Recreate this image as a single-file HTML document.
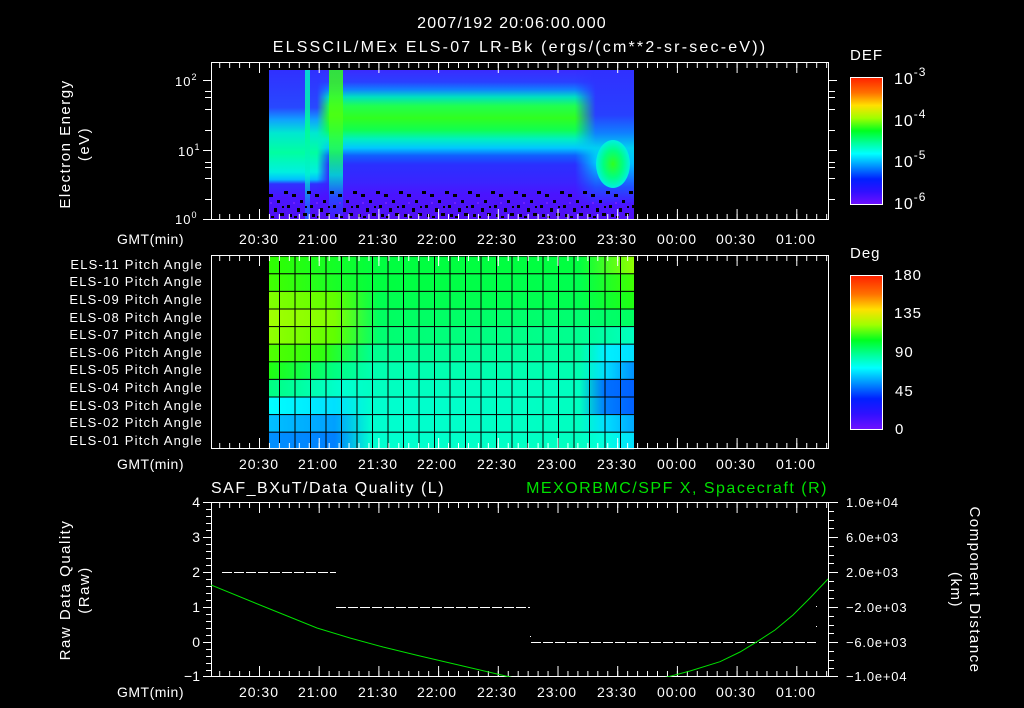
<!DOCTYPE html>
<html><head><meta charset="utf-8"><style>
html,body{margin:0;padding:0;background:#000;width:1024px;height:708px;overflow:hidden;position:relative}
.a{position:absolute}
svg{position:absolute;left:0;top:0}
text{font-family:"Liberation Sans",sans-serif;fill:#fff}
</style></head><body>
<div class="a" style="left:269px;top:70px;width:365px;height:150px;background:linear-gradient(to bottom,#3a2cff 0%,#2a40ff 8%,#1080ff 13%,#00e0c0 18%,#20ff50 24%,#30ff20 32%,#10ff50 40%,#00f0c0 46%,#00c8ff 52%,#1060ff 57%,#2a30ff 63%,#3a24ff 75%,#4a14ff 83%,#5010f0 100%)"></div>
<div class="a" style="left:269px;top:70px;width:60px;height:150px;background:linear-gradient(to bottom,#3030ff 0%,#2848ff 25%,#10a0ff 33%,#00e8d0 42%,#00ffa0 55%,#00f0e0 68%,#00c0ff 73%,#3030ff 76%,#4a14ff 85%,#5010f0 100%);-webkit-mask-image:linear-gradient(to right,#000 80%,transparent)"></div>
<div class="a" style="left:305px;top:70px;width:5px;height:150px;background:linear-gradient(to bottom,#00f0d0,#00ff90 40%,#00f0d0 70%,#2060ff 90%);opacity:.85"></div>
<div class="a" style="left:329px;top:70px;width:14px;height:150px;background:linear-gradient(to bottom,#30ff20,#50ff10 30%,#20ff50 55%,#00e0d0 70%,#2050ff 85%,#4a14ff);opacity:.85"></div>
<div class="a" style="left:575px;top:70px;width:59px;height:150px;background:linear-gradient(to bottom,#3030ff 0%,#2840ff 30%,#1080ff 42%,#00d0f0 52%,#00c0ff 62%,#2050ff 78%,#4a14ff 90%,#5010f0);-webkit-mask-image:linear-gradient(to right,transparent,#000 35%)"></div>
<div class="a" style="left:596px;top:140px;width:34px;height:48px;border-radius:50%;background:radial-gradient(#30ff20,#00ff80 40%,#00f0e0 70%,rgba(0,200,255,0) 100%)"></div>
<svg width="1024" height="708">
<defs>
<pattern id="nz" x="269" y="188" width="23" height="32" patternUnits="userSpaceOnUse">
<rect x="0" y="6" width="4" height="3" fill="#000"/><rect x="8" y="12" width="3" height="3" fill="#000"/><rect x="15" y="3" width="4" height="3" fill="#000"/><rect x="5" y="20" width="3" height="4" fill="#000"/><rect x="18" y="17" width="3" height="3" fill="#000"/><rect x="11" y="25" width="4" height="3" fill="#000"/><rect x="1" y="14" width="2" height="2" fill="#7020ff"/><rect x="20" y="26" width="3" height="3" fill="#000"/><rect x="13" y="18" width="2" height="2" fill="#000"/><rect x="2" y="28" width="3" height="2" fill="#000"/>
</pattern>
<pattern id="mt" x="259" y="0" width="9.95" height="708" patternUnits="userSpaceOnUse"><rect x="0" y="0" width="1" height="708" fill="#fff"/></pattern>
<pattern id="Mt" x="259" y="0" width="59.7" height="708" patternUnits="userSpaceOnUse"><rect x="0" y="0" width="1" height="708" fill="#fff"/></pattern>
<clipPath id="c3"><rect x="211" y="502" width="618" height="175"/></clipPath>
<linearGradient id="cb" x1="0" y1="0" x2="0" y2="1"><stop offset="0" stop-color="#ff2000"/><stop offset=".12" stop-color="#ff7000"/><stop offset=".22" stop-color="#ffe000"/><stop offset=".32" stop-color="#a0ff00"/><stop offset=".42" stop-color="#00ff20"/><stop offset=".52" stop-color="#00ffa0"/><stop offset=".6" stop-color="#00ffff"/><stop offset=".7" stop-color="#0090ff"/><stop offset=".8" stop-color="#0020ff"/><stop offset=".9" stop-color="#3010ff"/><stop offset="1" stop-color="#7010ff"/></linearGradient>
<linearGradient id="r1"><stop offset="0" stop-color="#30ff00"/><stop offset=".3" stop-color="#00ff40"/><stop offset=".85" stop-color="#00ff40"/><stop offset="1" stop-color="#90ff00"/></linearGradient>
<linearGradient id="r2"><stop offset="0" stop-color="#40ff00"/><stop offset=".3" stop-color="#00ff40"/><stop offset=".85" stop-color="#00ff50"/><stop offset="1" stop-color="#40ff00"/></linearGradient>
<linearGradient id="r3"><stop offset="0" stop-color="#80ff00"/><stop offset=".18" stop-color="#60ff00"/><stop offset=".3" stop-color="#00ff50"/><stop offset=".85" stop-color="#00ff50"/><stop offset="1" stop-color="#20ff10"/></linearGradient>
<linearGradient id="r4"><stop offset="0" stop-color="#a0ff00"/><stop offset=".18" stop-color="#80ff00"/><stop offset=".3" stop-color="#00ff60"/><stop offset=".85" stop-color="#00ff70"/><stop offset="1" stop-color="#00ff60"/></linearGradient>
<linearGradient id="r5"><stop offset="0" stop-color="#90ff00"/><stop offset=".18" stop-color="#60ff00"/><stop offset=".3" stop-color="#00ff70"/><stop offset=".85" stop-color="#00ff90"/><stop offset="1" stop-color="#00ffc0"/></linearGradient>
<linearGradient id="r6"><stop offset="0" stop-color="#50ff00"/><stop offset=".15" stop-color="#30ff10"/><stop offset=".28" stop-color="#00ff90"/><stop offset=".85" stop-color="#00ffa0"/><stop offset=".92" stop-color="#00f0ff"/><stop offset="1" stop-color="#00e0ff"/></linearGradient>
<linearGradient id="r7"><stop offset="0" stop-color="#20ff10"/><stop offset=".18" stop-color="#00ff80"/><stop offset=".28" stop-color="#00ffb0"/><stop offset=".85" stop-color="#00ffb0"/><stop offset=".92" stop-color="#00e0ff"/><stop offset="1" stop-color="#0090ff"/></linearGradient>
<linearGradient id="r8"><stop offset="0" stop-color="#00ff80"/><stop offset=".2" stop-color="#00ffd0"/><stop offset=".3" stop-color="#00ffc0"/><stop offset=".85" stop-color="#00ffc0"/><stop offset=".92" stop-color="#0070ff"/><stop offset="1" stop-color="#0060ff"/></linearGradient>
<linearGradient id="r9"><stop offset="0" stop-color="#00ffff"/><stop offset=".18" stop-color="#00e0ff"/><stop offset=".28" stop-color="#00ffd0"/><stop offset=".85" stop-color="#00ffc0"/><stop offset=".92" stop-color="#0080ff"/><stop offset="1" stop-color="#0060ff"/></linearGradient>
<linearGradient id="r10"><stop offset="0" stop-color="#00c0ff"/><stop offset=".18" stop-color="#00a0ff"/><stop offset=".28" stop-color="#00ffd0"/><stop offset=".85" stop-color="#00ffc0"/><stop offset=".92" stop-color="#00e0ff"/><stop offset="1" stop-color="#00a8ff"/></linearGradient>
<linearGradient id="r11"><stop offset="0" stop-color="#0090ff"/><stop offset=".18" stop-color="#0080ff"/><stop offset=".28" stop-color="#00ffd0"/><stop offset=".85" stop-color="#00ffc0"/><stop offset=".92" stop-color="#00ffe0"/><stop offset="1" stop-color="#00e0ff"/></linearGradient>
<pattern id="gv" x="279" y="0" width="15.5" height="708" patternUnits="userSpaceOnUse"><rect x="0" y="0" width="1" height="708" fill="#000"/></pattern>
<pattern id="gh" x="0" y="273.3" width="1024" height="17.6" patternUnits="userSpaceOnUse"><rect x="0" y="0" width="1024" height="1" fill="#000"/></pattern>
</defs>
<rect x="269" y="188" width="365" height="32" fill="url(#nz)"/>
<rect x="269" y="255.7" width="365" height="17.6" fill="url(#r1)"/>
<rect x="269" y="273.3" width="365" height="17.6" fill="url(#r2)"/>
<rect x="269" y="290.9" width="365" height="17.6" fill="url(#r3)"/>
<rect x="269" y="308.5" width="365" height="17.6" fill="url(#r4)"/>
<rect x="269" y="326.1" width="365" height="17.6" fill="url(#r5)"/>
<rect x="269" y="343.7" width="365" height="17.6" fill="url(#r6)"/>
<rect x="269" y="361.3" width="365" height="17.6" fill="url(#r7)"/>
<rect x="269" y="378.9" width="365" height="17.6" fill="url(#r8)"/>
<rect x="269" y="396.5" width="365" height="17.6" fill="url(#r9)"/>
<rect x="269" y="414.1" width="365" height="17.6" fill="url(#r10)"/>
<rect x="269" y="431.7" width="365" height="17.6" fill="url(#r11)"/>
<rect x="269" y="255.7" width="365" height="193.6" fill="url(#gv)"/>
<rect x="269" y="255.7" width="365" height="193.6" fill="url(#gh)"/>
<g fill="none" stroke="#fff" stroke-width="1">
<rect x="211.5" y="62.5" width="617" height="157"/>
<rect x="211.5" y="255.5" width="617" height="193"/>
<rect x="211.5" y="502.5" width="617" height="174"/>
</g>
<rect x="212" y="63" width="616" height="5" fill="url(#mt)"/><rect x="212" y="63" width="616" height="10" fill="url(#Mt)"/>
<rect x="212" y="214" width="616" height="5" fill="url(#mt)"/><rect x="212" y="209" width="616" height="10" fill="url(#Mt)"/>
<rect x="212" y="256" width="616" height="5" fill="url(#mt)"/><rect x="212" y="256" width="616" height="10" fill="url(#Mt)"/>
<rect x="212" y="443" width="616" height="5" fill="url(#mt)"/><rect x="212" y="438" width="616" height="10" fill="url(#Mt)"/>
<rect x="212" y="503" width="616" height="5" fill="url(#mt)"/><rect x="212" y="503" width="616" height="10" fill="url(#Mt)"/>
<rect x="212" y="671" width="616" height="5" fill="url(#mt)"/><rect x="212" y="666" width="616" height="10" fill="url(#Mt)"/>
<g stroke="#fff">
<path d="M203 80.5H211M205 91.5H211M205 97.5H211M205 109.5H211M205 130.5H211M203 150.5H211M205 162.5H211M205 167.5H211M205 178.5H211M205 199.5H211M203 219.5H211"/>
<path d="M829 80.5H837M829 91.5H835M829 97.5H835M829 109.5H835M829 130.5H835M829 150.5H837M829 162.5H835M829 167.5H835M829 178.5H835M829 199.5H835"/>
<path d="M203 502.5H211M203 537.5H211M203 572.5H211M203 607.5H211M203 642.5H211M203 676.5H211M206 509.5H211M206 516.5H211M206 523.5H211M206 530.5H211M206 544.5H211M206 551.5H211M206 558.5H211M206 565.5H211M206 579.5H211M206 586.5H211M206 593.5H211M206 600.5H211M206 614.5H211M206 621.5H211M206 628.5H211M206 635.5H211M206 649.5H211M206 656.5H211M206 663.5H211M206 670.5H211"/>
<path d="M829 502.5H838M829 537.5H838M829 572.5H838M829 607.5H838M829 642.5H838M829 676.5H838M829 511.5H834M829 520.5H834M829 528.5H834M829 546.5H834M829 555.5H834M829 563.5H834M829 581.5H834M829 590.5H834M829 598.5H834M829 616.5H834M829 625.5H834M829 633.5H834M829 651.5H834M829 660.5H834M829 668.5H834"/>
<path d="M876 81.5H883M878 88.5H883M878 95.5H883M876 123.5H883M878 130.5H883M878 137.5H883M876 164.5H883M878 171.5H883M878 178.5H883M876 192.5H883"/>
<path d="M877 282.5H883M877 290.5H883M877 298.5H883M877 313.5H883M877 321.5H883M877 329.5H883M877 336.5H883M877 352.5H883M877 360.5H883M877 367.5H883M877 375.5H883M877 391.5H883M877 398.5H883M877 406.5H883M877 414.5H883"/>
</g>
<rect x="850.5" y="77.5" width="32" height="127" fill="url(#cb)" stroke="#fff"/>
<rect x="850.5" y="275.5" width="32" height="154" fill="url(#cb)" stroke="#fff"/>
<g stroke="#fff" stroke-dasharray="10 2" stroke-width="1">
<path d="M222 572.5H336M336 607.5H530M531 642.5H816"/>
</g>
<rect x="816" y="606" width="1" height="1" fill="#fff"/><rect x="816" y="626" width="1" height="1" fill="#fff"/><rect x="530" y="636" width="1" height="1" fill="#fff"/>
<polyline clip-path="url(#c3)" fill="none" stroke="#00e000" stroke-width="1" points="211,585 260,605 317,628 350,638 383,647 420,656 450,663 480,670 512,677.5 540,682 600,686 640,682 666,677.3 690,671 720,661.7 740,652 757,641.7 775,630 793,615 810,598 828,579"/>
<g font-size="16" text-anchor="middle">
<text x="512" y="28" letter-spacing="1.2">2007/192 20:06:00.000</text>
<text x="520" y="52" letter-spacing="2.2">ELSSCIL/MEx ELS-07 LR-Bk  (ergs/(cm**2-sr-sec-eV))</text>
</g>
<g font-size="15" letter-spacing="1">
<text x="850" y="60">DEF</text>
<text x="850" y="258">Deg</text>
<text x="894" y="84" font-size="16">10<tspan dy="-8" font-size="12">-3</tspan></text>
<text x="894" y="126" font-size="16">10<tspan dy="-8" font-size="12">-4</tspan></text>
<text x="894" y="167" font-size="16">10<tspan dy="-8" font-size="12">-5</tspan></text>
<text x="894" y="209" font-size="16">10<tspan dy="-8" font-size="12">-6</tspan></text>
<text x="894" y="280">180</text><text x="894" y="318">135</text><text x="895" y="357">90</text><text x="895" y="396">45</text><text x="895" y="434">0</text>
<text x="175" y="86" font-size="13">10<tspan dy="-6" font-size="9">2</tspan></text>
<text x="178" y="156" font-size="13">10<tspan dy="-6" font-size="9">1</tspan></text>
<text x="175" y="224" font-size="13">10<tspan dy="-6" font-size="9">0</tspan></text>
</g>
<g font-size="14" text-anchor="middle" letter-spacing="1">
<text x="259" y="244">20:30</text><text x="318" y="244">21:00</text><text x="378" y="244">21:30</text><text x="437" y="244">22:00</text><text x="497" y="244">22:30</text><text x="557" y="244">23:00</text><text x="617" y="244">23:30</text><text x="677" y="244">00:00</text><text x="736" y="244">00:30</text><text x="796" y="244">01:00</text>
<text x="259" y="469">20:30</text><text x="318" y="469">21:00</text><text x="378" y="469">21:30</text><text x="437" y="469">22:00</text><text x="497" y="469">22:30</text><text x="557" y="469">23:00</text><text x="617" y="469">23:30</text><text x="677" y="469">00:00</text><text x="736" y="469">00:30</text><text x="796" y="469">01:00</text>
<text x="259" y="697">20:30</text><text x="318" y="697">21:00</text><text x="378" y="697">21:30</text><text x="437" y="697">22:00</text><text x="497" y="697">22:30</text><text x="557" y="697">23:00</text><text x="617" y="697">23:30</text><text x="677" y="697">00:00</text><text x="736" y="697">00:30</text><text x="796" y="697">01:00</text>
</g>
<g font-size="14" letter-spacing="0.5">
<text x="117" y="244">GMT(min)</text><text x="117" y="469">GMT(min)</text><text x="117" y="697">GMT(min)</text>
</g>
<g font-size="13" text-anchor="end" letter-spacing="1.2">
<text x="203" y="269">ELS-11 Pitch Angle</text><text x="203" y="286">ELS-10 Pitch Angle</text><text x="203" y="304">ELS-09 Pitch Angle</text><text x="203" y="322">ELS-08 Pitch Angle</text><text x="203" y="339">ELS-07 Pitch Angle</text><text x="203" y="357">ELS-06 Pitch Angle</text><text x="203" y="374">ELS-05 Pitch Angle</text><text x="203" y="392">ELS-04 Pitch Angle</text><text x="203" y="410">ELS-03 Pitch Angle</text><text x="203" y="427">ELS-02 Pitch Angle</text><text x="203" y="445">ELS-01 Pitch Angle</text>
</g>
<g font-size="14" text-anchor="end">
<text x="200" y="507">4</text><text x="200" y="542">3</text><text x="200" y="577">2</text><text x="200" y="612">1</text><text x="200" y="647">0</text><text x="200" y="681">−1</text>
</g>
<g font-size="13" letter-spacing="0.8">
<text x="846" y="507">1.0e+04</text><text x="846" y="542">6.0e+03</text><text x="846" y="577">2.0e+03</text><text x="846" y="612">−2.0e+03</text><text x="846" y="647">−6.0e+03</text><text x="846" y="681">−1.0e+04</text>
</g>
<text x="211" y="493" font-size="16" letter-spacing="1.5">SAF_BXuT/Data Quality (L)</text>
<text x="828" y="493" font-size="16" letter-spacing="1.5" text-anchor="end" style="fill:#00e000">MEXORBMC/SPF X, Spacecraft (R)</text>
<g font-size="15" text-anchor="middle" letter-spacing="1.5">
<text transform="translate(70,144) rotate(-90)">Electron Energy</text>
<text transform="translate(89,144) rotate(-90)">(eV)</text>
<text transform="translate(70,590) rotate(-90)">Raw Data Quality</text>
<text transform="translate(89,590) rotate(-90)">(Raw)</text>
<text transform="translate(970,590) rotate(90)">Component Distance</text>
<text transform="translate(951,590) rotate(90)">(km)</text>
</g>
</svg>
</body></html>
